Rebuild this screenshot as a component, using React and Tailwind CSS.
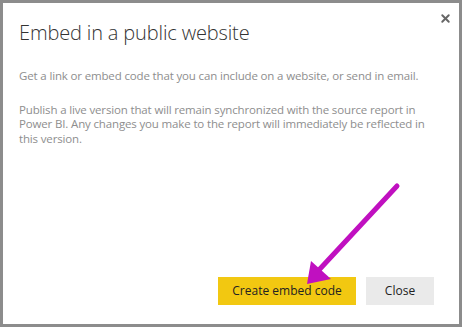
import { X } from 'lucide-react';

function Arrow() {
  return (
    <svg className="absolute left-0 top-0" width="466" height="328" viewBox="0 0 466 328">
      <line x1="397" y1="186" x2="318" y2="271" stroke="#c010c0" strokeWidth="5" strokeLinecap="round" />
      <polygon points="307,284 311,261 331,279" fill="#c010c0" />
    </svg>
  );
}

export default function App() {
  return (
    <div className="relative w-[466px] h-[328px] bg-white" style={{ fontFamily: '"Open Sans", "Noto Sans", sans-serif' }}>
      <div className="flex flex-col w-[462px] h-[327px] border-[3px] border-[#8c8c8c] bg-white">
        <div className="flex justify-end pt-[9px] pr-[7px] h-0">
          <X size={13} strokeWidth={3.5} className="text-[#666]" />
        </div>
        <h1 className="pl-[16px] pt-[7px] text-[20px] font-light leading-[28px] text-[#333] tracking-[-0.15px]">
          Embed in a public website
        </h1>
        <div className="pl-[16px] pr-[30px] pt-[22px] text-[11.5px] leading-[14.5px] text-[#8e8e8e] tracking-[-0.15px]">
          <p>Get a link or embed code that you can include on a website, or send in email.</p>
          <p className="mt-[19px]">
            Publish a live version that will remain synchronized with the source report in Power BI. Any changes you make to the report will immediately be reflected in this version.
          </p>
        </div>
        <div className="mt-auto flex justify-end gap-[10px] pr-[25px] pb-[19px]">
          <button className="w-[138px] h-[28px] bg-[#f2c811] text-[12px] text-[#222]">Create embed code</button>
          <button className="w-[68px] h-[28px] bg-[#eaeaea] text-[12px] text-[#222]">Close</button>
        </div>
      </div>
      <Arrow />
    </div>
  );
}
